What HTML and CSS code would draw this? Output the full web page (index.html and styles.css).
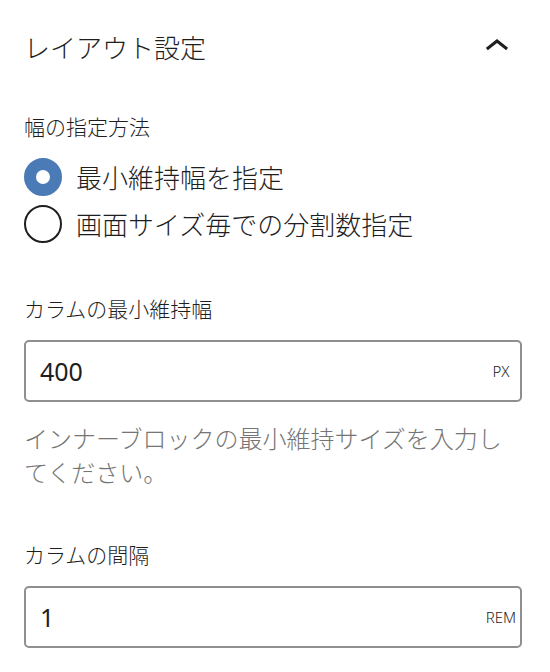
FILE: index.html
```html
<!DOCTYPE html>
<html lang="ja">
<head>
<meta charset="utf-8">
<title>レイアウト設定</title>
<link rel="stylesheet" href="styles.css">
</head>
<body>
<div class="panel">
  <div class="panel-header">
    <h2 class="panel-title">レイアウト設定</h2>
    <span class="toggle-icon">
      <svg viewBox="0 0 24 24" width="48" height="48" aria-hidden="true"><path d="M6.5 12.4L12 8l5.5 4.4-.9 1.2L12 10l-4.6 3.6-1-1.2z"/></svg>
    </span>
  </div>

  <div class="field field-radio">
    <div class="label">幅の指定方法</div>
    <div class="radio-group">
      <label class="radio-row"><span class="radio radio-checked"></span><span class="radio-label">最小維持幅を指定</span></label>
      <label class="radio-row"><span class="radio"></span><span class="radio-label">画面サイズ毎での分割数指定</span></label>
    </div>
  </div>

  <div class="field field-min">
    <div class="label">カラムの最小維持幅</div>
    <div class="unit-input">
      <span class="unit-value">400</span>
      <span class="unit">PX</span>
    </div>
    <p class="help">インナーブロックの最小維持サイズを入力してください。</p>
  </div>

  <div class="field field-gap">
    <div class="label">カラムの間隔</div>
    <div class="unit-input">
      <span class="unit-value">1</span>
      <span class="unit">REM</span>
    </div>
  </div>
</div>
</body>
</html>
```

FILE: styles.css
```css
html, body {
  margin: 0;
  padding: 0;
  background: #ffffff;
}

body {
  font-family: "Noto Sans CJK JP", "Noto Sans", sans-serif;
  font-weight: 300;
  color: #1e1e1e;
}

.panel {
  padding: 23px 28px 0 24px;
}

.panel-header {
  display: flex;
  align-items: center;
  justify-content: space-between;
  height: 48px;
}

.panel-title {
  margin: 0;
  font-size: 26px;
  font-weight: 300;
  line-height: 48px;
}

.toggle-icon {
  display: flex;
  width: 48px;
  height: 48px;
  margin-right: 1px;
}

.toggle-icon svg {
  fill: #1e1e1e;
}

.label {
  font-size: 21px;
  line-height: 30px;
}

.field-radio {
  margin-top: 40px;
}

.radio-group {
  display: flex;
  flex-direction: column;
  gap: 7px;
  margin-top: 16px;
}

.radio-row {
  display: flex;
  align-items: center;
  height: 40px;
  gap: 14px;
}

.radio {
  box-sizing: border-box;
  width: 38px;
  height: 38px;
  border-radius: 50%;
  border: 2px solid #1e1e1e;
  flex: none;
}

.radio-checked {
  border: 12px solid #4a7bb7;
  background: #ffffff;
}

.radio-label {
  font-size: 26px;
  line-height: 40px;
}

.field-min {
  margin-top: 49px;
}

.field-gap {
  margin-top: 50px;
}

.unit-input {
  box-sizing: border-box;
  display: flex;
  align-items: center;
  justify-content: space-between;
  height: 62px;
  margin-top: 17px;
  padding: 0 2px 0 14px;
  border: 2px solid #8f8f8f;
  border-radius: 5px;
}

.unit-value {
  font-family: "Noto Sans", "Open Sans", sans-serif;
  font-weight: 400;
  font-size: 25px;
}

.unit {
  width: 34px;
  text-align: center;
  font-family: "Noto Sans", "Liberation Sans", sans-serif;
  font-weight: 300;
  font-size: 15px;
  color: #1e1e1e;
}

.help {
  margin: 19px 0 0 0;
  font-size: 24px;
  line-height: 34px;
  color: #757575;
}
```
